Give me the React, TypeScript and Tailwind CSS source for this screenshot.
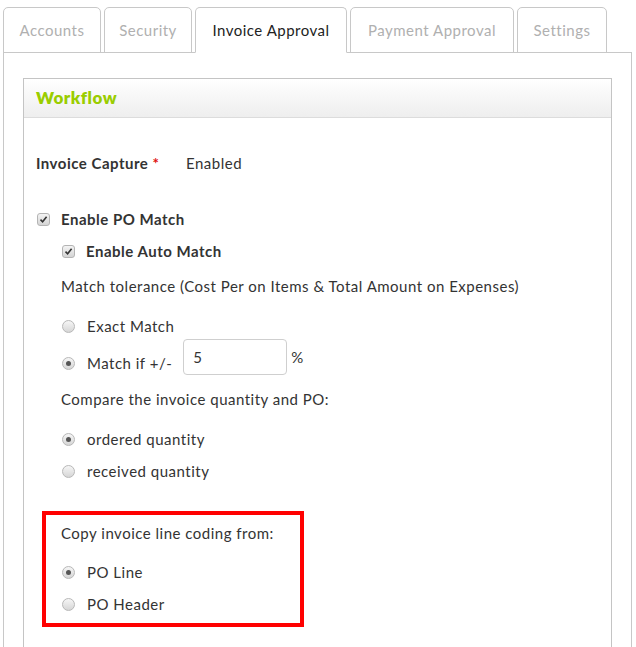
import React from 'react';

const tabs = [
  { label: 'Accounts', width: 'w-[98px]' },
  { label: 'Security', width: 'w-[88px]' },
  { label: 'Invoice Approval', width: 'w-[152px]', active: true },
  { label: 'Payment Approval', width: 'w-[164px]' },
  { label: 'Settings', width: 'w-[90px]' },
];

const Checkbox: React.FC = () => (
  <span className="flex h-[13px] w-[13px] shrink-0 items-center justify-center rounded-[3px] border border-[#b4b4b4] bg-gradient-to-b from-[#f4f4f4] to-[#d4d4d4]">
    <svg width="9" height="9" viewBox="0 0 9 9">
      <path d="M1.5 4.6 L3.6 6.7 L7.6 1.8" fill="none" stroke="#333" strokeWidth="1.6" />
    </svg>
  </span>
);

const Radio: React.FC<{ checked?: boolean }> = ({ checked }) => (
  <span className="flex h-[13px] w-[13px] shrink-0 items-center justify-center rounded-full border border-[#b8b8b8] bg-gradient-to-b from-[#f6f6f6] to-[#d6d6d6]">
    {checked && <span className="h-[5px] w-[5px] rounded-full bg-[#555]" />}
  </span>
);

const RadioRow: React.FC<{ label: string; checked?: boolean; className?: string }> = ({
  label,
  checked,
  className = '',
}) => (
  <div className={`flex h-5 items-center gap-[12px] pl-[1px] ${className}`}>
    <Radio checked={checked} />
    <span>{label}</span>
  </div>
);

export default function App() {
  return (
    <div className="min-h-[647px] bg-white font-['Lato',sans-serif] text-[15px] tracking-[0.5px] text-[#333]">
      {/* tab strip */}
      <div className="ml-[3px] mr-[4px] flex gap-[3px] border-b border-[#c8c8c8] pt-[7px]">
        {tabs.map((t) => (
          <div
            key={t.label}
            className={`${t.width} -mb-px flex h-[46px] items-center justify-center rounded-t-[5px] border border-[#c8c8c8] ${
              t.active ? 'border-b-white bg-white text-[#222]' : 'text-[#b0b0b0]'
            }`}
          >
            {t.label}
          </div>
        ))}
      </div>

      {/* panel */}
      <div className="ml-[3px] mr-[4px] h-[595px] border-x border-[#c8c8c8] px-[19px] pt-[25px]">
        <div className="h-[600px] border border-[#c4c4c4]">
          <div className="flex h-[39px] items-center border-b border-[#dcdcdc] bg-gradient-to-b from-white to-[#eeeeee] pl-[12px] text-[17px] font-extrabold text-[#9acd00]">
            Workflow
          </div>

          <div className="pl-[12px] pt-[35px]">
            <div className="flex h-5 items-center">
              <span className="w-[150px] font-bold">
                Invoice Capture <span className="text-[#e01010]">*</span>
              </span>
              <span>Enabled</span>
            </div>

            <div className="mt-[36px] flex h-5 items-center gap-[11px] pl-[1px]">
              <Checkbox />
              <span className="font-bold">Enable PO Match</span>
            </div>

            <div className="pl-[25px]">
              <div className="mt-[12px] flex h-5 items-center gap-[11px] pl-[1px]">
                <Checkbox />
                <span className="font-bold">Enable Auto Match</span>
              </div>

              <div className="mt-[15px] flex h-5 items-center">
                Match tolerance (Cost Per on Items &amp; Total Amount on Expenses)
              </div>

              <RadioRow label="Exact Match" className="mt-[20px]" />

              <div className="mt-[3px] flex h-[36px]">
                <RadioRow label="Match if +/-" checked className="mb-[2px] self-end" />
                <div className="ml-[11px] h-[36px] w-[104px] rounded-[4px] border border-[#cfcfcf] pl-[9px] pt-[6px]">
                  5
                </div>
                <span className="ml-[4px] self-center">%</span>
              </div>

              <div className="mt-[14px] flex h-5 items-center">Compare the invoice quantity and PO:</div>

              <RadioRow label="ordered quantity" checked className="mt-[20px]" />
              <RadioRow label="received quantity" className="mt-[12px]" />
            </div>

            <div className="ml-[6px] mt-[30px] h-[116px] w-[262px] border-4 border-[#ff0000] pb-[9px] pl-[15px] pt-[8px]">
              <div className="flex h-5 items-center">Copy invoice line coding from:</div>
              <RadioRow label="PO Line" checked className="mt-[19px]" />
              <RadioRow label="PO Header" className="mt-[12px]" />
            </div>
          </div>
        </div>
      </div>
    </div>
  );
}
